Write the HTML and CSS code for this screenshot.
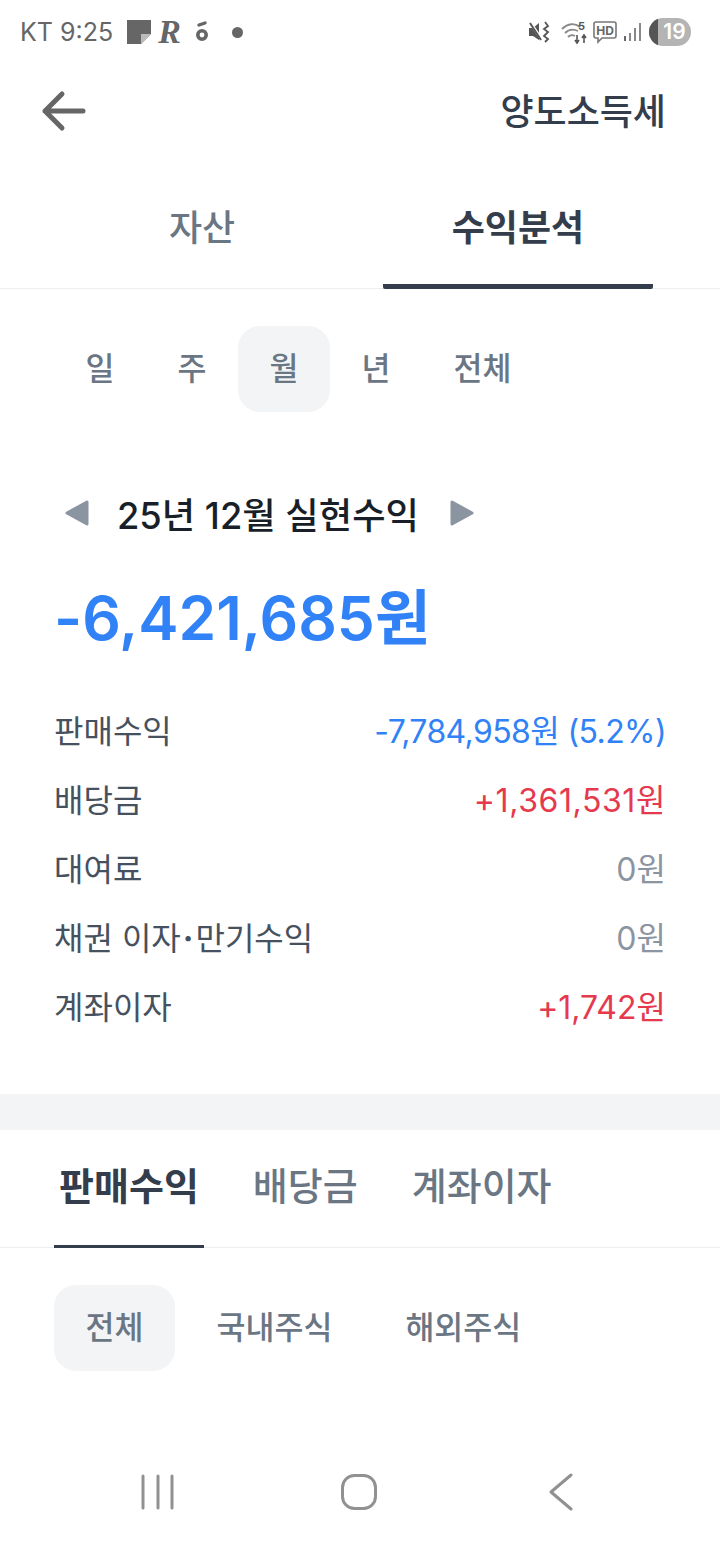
FILE: index.html
```html
<!DOCTYPE html>
<html lang="ko">

<head>
    <meta charset="UTF-8">
    <meta name="viewport" content="width=device-width, initial-scale=1.0">
    <title>양도소득세</title>
    <link rel="stylesheet" href="styles.css">
</head>

<body>
    <div class="status-bar">
        <div class="status-left">
            <span class="status-text">KT 9:25</span>
            <svg class="note-icon" width="26" height="26" viewBox="0 0 26 26">
                <path d="M1 1H25V15L15 25H1Z" fill="#666"/>
                <path d="M25 15L15 25V15Z" fill="#bbb"/>
            </svg>
            <span class="r-icon">R</span>
            <svg class="small-icon" width="14" height="24" viewBox="0 0 14 24">
                <path d="M4 5L10 3" stroke="#666" stroke-width="3.4" stroke-linecap="round"/>
                <circle cx="7" cy="15" r="4.2" fill="none" stroke="#666" stroke-width="3.6"/>
            </svg>
            <span class="status-dot"></span>
        </div>
        <div class="status-right">
            <svg class="mute-icon" width="22" height="24" viewBox="0 0 22 24">
                <path d="M1 8H5L11 3V20L5 16H1Z" fill="#555"/>
                <path d="M2 2L14 20" stroke="#fff" stroke-width="3"/>
                <path d="M2 3L13 20" stroke="#555" stroke-width="2"/>
                <path d="M17 2L20 6L16 9L20 12L16 16L20 19L17 22" fill="none" stroke="#555" stroke-width="1.8"/>
            </svg>
            <svg class="wifi-icon" width="30" height="26" viewBox="0 0 30 26">
                <path d="M2 10C8 4 15 4 20 8M5 14C9 10 14 10 18 12M8 18C10 16 13 16 15 17" fill="none" stroke="#888" stroke-width="1.8"/>
                <path d="M17 16V24M15 21L17 24L19 21M24 24V16M22 19L24 16L26 19" fill="none" stroke="#555" stroke-width="1.6"/>
                <text x="18" y="11" class="net-label">5</text>
            </svg>
            <svg class="hd-icon" width="24" height="26" viewBox="0 0 24 26">
                <path d="M3 3H21Q23 3 23 5V17Q23 19 21 19H9L5 23V19H3Q1 19 1 17V5Q1 3 3 3Z" fill="none" stroke="#777" stroke-width="1.6"/>
                <text x="12" y="16" text-anchor="middle" class="hd-label">HD</text>
            </svg>
            <svg class="signal-icon" width="18" height="20" viewBox="0 0 18 20">
                <rect x="1" y="14" width="2" height="5" fill="#666"/>
                <rect x="6" y="11" width="2" height="8" fill="#888"/>
                <rect x="11" y="6" width="2" height="13" fill="#888"/>
                <rect x="16" y="1" width="2" height="18" fill="#888"/>
            </svg>
            <span class="battery"><span class="battery-level"></span><span class="battery-num">19</span></span>
        </div>
    </div>

    <header class="app-header">
        <svg class="back-icon" width="48" height="44" viewBox="0 0 48 44">
            <path d="M22 6L5 23L22 40M5 23H43" fill="none" stroke="#666" stroke-width="5" stroke-linecap="round" stroke-linejoin="round"/>
        </svg>
        <span class="tax-link">양도소득세</span>
    </header>

    <nav class="main-tabs">
        <div class="main-tab">자산</div>
        <div class="main-tab active">수익분석</div>
    </nav>

    <div class="period-tabs">
        <div class="pill">일</div>
        <div class="pill">주</div>
        <div class="pill active">월</div>
        <div class="pill">년</div>
        <div class="pill">전체</div>
    </div>

    <section class="summary">
        <div class="month-row">
            <svg width="26" height="28" viewBox="0 0 26 28"><path d="M3 14L23 3V25Z" fill="#8b95a1" stroke="#8b95a1" stroke-width="3" stroke-linejoin="round"/></svg>
            <h2 class="month-title">25년 12월 실현수익</h2>
            <svg width="26" height="28" viewBox="0 0 26 28"><path d="M23 14L3 3V25Z" fill="#8b95a1" stroke="#8b95a1" stroke-width="3" stroke-linejoin="round"/></svg>
        </div>
        <div class="total">-6,421,685원</div>

        <div class="rows">
            <div class="row"><span>판매수익</span><span class="blue">-7,784,958원 (5.2%)</span></div>
            <div class="row"><span>배당금</span><span class="red long">+1,361,531원</span></div>
            <div class="row"><span>대여료</span><span class="gray">0원</span></div>
            <div class="row"><span>채권 이자<span class="mid-dot">·</span>만기수익</span><span class="gray">0원</span></div>
            <div class="row"><span>계좌이자</span><span class="red">+1,742원</span></div>
        </div>
    </section>

    <div class="divider"></div>

    <nav class="sub-tabs">
        <div class="sub-tab active">판매수익</div>
        <div class="sub-tab">배당금</div>
        <div class="sub-tab">계좌이자</div>
    </nav>

    <div class="market-tabs">
        <div class="pill active">전체</div>
        <div class="pill">국내주식</div>
        <div class="pill">해외주식</div>
    </div>

    <div class="nav-bar">
        <svg width="36" height="36" viewBox="0 0 36 36">
            <path d="M3 2V34M18 2V34M32 2V34" stroke="#919191" stroke-width="3" stroke-linecap="round"/>
        </svg>
        <svg width="38" height="38" viewBox="0 0 38 38">
            <rect x="2.5" y="2.5" width="33" height="33" rx="12" fill="none" stroke="#919191" stroke-width="3"/>
        </svg>
        <svg class="nav-back" width="26" height="38" viewBox="0 0 26 38">
            <path d="M23 2L3 19L23 36" fill="none" stroke="#919191" stroke-width="3" stroke-linecap="round" stroke-linejoin="round"/>
        </svg>
    </div>
</body>

</html>
```

FILE: styles.css
```css
/* Reset */
* {
    margin: 0;
    padding: 0;
    box-sizing: border-box;
}

body {
    width: 720px;
    height: 1544px;
    overflow: hidden;
    background: #fff;
    color: #333d4b;
    font-family: 'Inter', 'Noto Sans CJK KR', sans-serif;
    display: flex;
    flex-direction: column;
}

svg {
    display: block;
    flex: none;
}

/* Status bar */
.status-bar {
    height: 64px;
    padding: 0 29px 0 20px;
    display: flex;
    justify-content: space-between;
    align-items: center;
}

.status-left,
.status-right {
    display: flex;
    align-items: center;
}

.status-text {
    font-size: 25px;
    color: #666;
    margin-right: 13px;
}

.r-icon {
    font-family: 'Liberation Serif', serif;
    font-style: italic;
    font-weight: 700;
    font-size: 34px;
    line-height: 32px;
    color: #666;
    margin: 0 14px 0 6px;
}

.status-dot {
    width: 11px;
    height: 11px;
    margin-left: 23px;
    border-radius: 50%;
    background: #666;
}

.mute-icon {
    margin-right: 10px;
}

.wifi-icon {
    margin-right: 3px;
}

.signal-icon {
    margin: 0 8px 0 6px;
}

.net-label {
    font-size: 11px;
    font-weight: 700;
    fill: #555;
}

.hd-label {
    font-size: 12px;
    font-weight: 700;
    fill: #666;
}

.battery {
    position: relative;
    width: 42px;
    height: 28px;
    border-radius: 14px;
    overflow: hidden;
    background: #b4b4b4;
}

.battery-level {
    position: absolute;
    left: 0;
    top: 0;
    width: 9px;
    height: 28px;
    background: #555;
}

.battery-num {
    position: absolute;
    left: 9px;
    right: 0;
    text-align: center;
    font-size: 21px;
    line-height: 28px;
    font-weight: 600;
    color: #fff;
}

/* Header */
.app-header {
    height: 92px;
    padding: 0 54px 0 40px;
    display: flex;
    justify-content: space-between;
    align-items: center;
}

.tax-link {
    padding-bottom: 3px;
    font-size: 36px;
    font-weight: 500;
}

/* Main tabs */
.main-tabs {
    height: 133px;
    padding: 0 67px;
    display: flex;
    justify-content: space-between;
    border-bottom: 1px solid #eceef1;
}

.main-tab {
    width: 270px;
    height: 133px;
    text-align: center;
    font-size: 36px;
    line-height: 144px;
    font-weight: 500;
    color: #6b7684;
}

.main-tab.active {
    color: #333d4b;
    font-weight: 700;
    border-bottom: 5px solid #333d4b;
    border-radius: 0 0 2px 2px;
}

/* Pills */
.period-tabs,
.market-tabs {
    display: flex;
    padding: 0 54px;
}

.period-tabs {
    margin-top: 37px;
}

.pill {
    height: 86px;
    padding: 0 31.5px;
    border-radius: 22px;
    font-size: 31.5px;
    line-height: 86px;
    font-weight: 500;
    color: #6b7684;
}

.pill.active {
    background: #f2f4f6;
}

/* Summary */
.summary {
    padding: 0 54px;
}

.month-row {
    margin-top: 75px;
    padding-left: 10px;
    display: flex;
    align-items: center;
    gap: 27px;
}

.month-title {
    margin-right: 3px;
    font-size: 36.3px;
    font-weight: 500;
    color: #191f28;
}

.total {
    margin-top: 39px;
    font-size: 60.5px;
    line-height: 80px;
    font-weight: 600;
    color: #3182f6;
}

.rows {
    margin-top: 36px;
}

.row {
    height: 69px;
    display: flex;
    justify-content: space-between;
    align-items: center;
    font-size: 32px;
    font-weight: 400;
    color: #465160;
}

.mid-dot {
    margin: 0 2px;
    font-weight: 700;
}

.blue {
    color: #3182f6;
    letter-spacing: -0.6px;
}

.red {
    color: #e5394d;
}

.red.long {
    letter-spacing: 0.6px;
}

.gray {
    color: #8b95a1;
}

.divider {
    height: 36px;
    margin-top: 55px;
    background: #f2f4f6;
}

/* Sub tabs */
.sub-tabs {
    height: 118px;
    padding: 0 54px;
    display: flex;
    gap: 44px;
    border-bottom: 1px solid #eceef1;
}

.sub-tab {
    height: 118px;
    padding: 0 5px;
    font-size: 38px;
    line-height: 112px;
    font-weight: 500;
    color: #6b7684;
}

.sub-tab.active {
    color: #333d4b;
    font-weight: 700;
    border-bottom: 3px solid #333d4b;
}

.market-tabs {
    margin-top: 37px;
    gap: 10px;
}

/* Nav bar */
.nav-bar {
    margin-top: 102px;
    padding: 0 140px;
    display: flex;
    gap: 164px;
    align-items: center;
}

.nav-back {
    margin-left: 6px;
}
```
